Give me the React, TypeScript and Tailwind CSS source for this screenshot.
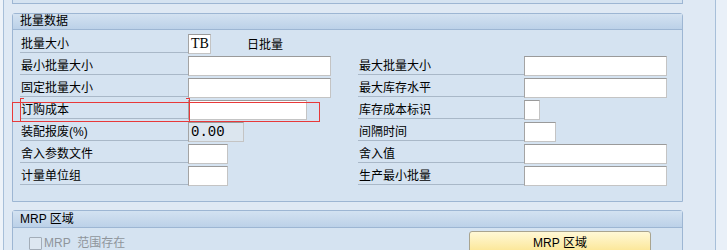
import React from "react";

type Cell = { label: string; w: number; value?: string; disabled?: boolean; extra?: string; serif?: boolean } | null;

const rows: [Cell, Cell][] = [
  [{ label: "批量大小", w: 23, value: "TB", extra: "日批量", serif: true }, null],
  [{ label: "最小批量大小", w: 143 }, { label: "最大批量大小", w: 143 }],
  [{ label: "固定批量大小", w: 143 }, { label: "最大库存水平", w: 143 }],
  [{ label: "订购成本", w: 119 }, { label: "库存成本标识", w: 16 }],
  [{ label: "装配报废(%)", w: 56, value: "0.00", disabled: true }, { label: "间隔时间", w: 32 }],
  [{ label: "舍入参数文件", w: 40 }, { label: "舍入值", w: 143 }],
  [{ label: "计量单位组", w: 40 }, { label: "生产最小批量", w: 143 }],
];

function Input({ w, value, disabled, serif }: { w: number; value?: string; disabled?: boolean; serif?: boolean }) {
  return (
    <div
      className={
        "h-[20px] border border-t-[#9a9a9a] border-l-[#a4a4a4] border-r-[#c4c4c4] border-b-[#c4c4c4] flex items-center pl-[2px] text-[14px] leading-[18px] text-black " +
        (disabled ? "bg-[#dce6ef]" : "bg-white")
      }
      style={{
        width: w,
        fontFamily: serif ? '"Liberation Serif", serif' : '"Liberation Mono", "DejaVu Sans Mono", monospace',
      }}
    >
      {value}
    </div>
  );
}

function Label({ text, w }: { text: string; w: number }) {
  return (
    <div
      className="h-[19px] border-b border-[#a9b8c8] pl-[1px] text-[12px] leading-[16px] pt-[2px] text-black whitespace-nowrap"
      style={{ width: w }}
    >
      {text}
    </div>
  );
}

export default function App() {
  const font = { fontFamily: '"Liberation Sans", "Noto Sans CJK SC", sans-serif' };
  return (
    <div className="relative w-[727px] h-[250px] overflow-hidden bg-[#eaf1f8] flex" style={font}>
      <div className="w-[3px] h-full bg-[#eef3f9]" />
      <div className="w-[713px] h-full bg-[#dfe9f4] border-l border-r border-[#a7bfd9] pl-[8px]">
        <div className="w-[671px] h-[4px] bg-[#d5e3f1] border-l border-r border-b border-[#9db6d3]" />
        <div className="mt-[9px] w-[671px] h-[189px] bg-[#d5e3f1] border border-[#9db6d3] rounded-t-[3px]">
          <div className="h-[16px] border-b border-[#9db6d3] bg-gradient-to-b from-[#d3e2f1] to-[#bcd1e8] pl-[7px] text-[12px] leading-[15px] text-black">
            批量数据
          </div>
          <div className="pt-[4px] pl-[7px] flex flex-col">
            {rows.map(([l, r], i) => (
              <div key={i} className="h-[22px] flex items-start">
                {l && (
                  <>
                    <Label text={l.label} w={168} />
                    <div className="w-[170px] flex items-start">
                      <Input w={l.w} value={l.value} disabled={l.disabled} serif={l.serif} />
                      {l.extra && (
                        <span className="ml-[36px] text-[12px] leading-[16px] pt-[3px] text-black">{l.extra}</span>
                      )}
                    </div>
                  </>
                )}
                {r && (
                  <>
                    <Label text={r.label} w={166} />
                    <Input w={r.w} />
                  </>
                )}
              </div>
            ))}
          </div>
        </div>
        <div className="mt-[8px] w-[671px] h-[60px] bg-[#d5e3f1] border border-[#9db6d3] rounded-t-[3px]">
          <div className="h-[17px] border-b border-[#9db6d3] bg-gradient-to-b from-[#d3e2f1] to-[#bcd1e8] pl-[7px] text-[12px] leading-[16px] text-black">
            MRP 区域
          </div>
          <div className="flex items-start">
            <div className="w-[456px] pl-[16px] pt-[8px] flex items-center">
              <div className="w-[13px] h-[13px] border border-[#a3adb8] bg-[#dde7f1] rounded-[1px]" />
              <span className="ml-[2px] text-[12px] leading-[14px] text-[#8f959b]">MRP&nbsp;&nbsp;范围存在</span>
            </div>
            <div className="mt-[3px] w-[182px] h-[24px] border border-[#a9a48f] rounded-t-[3px] bg-gradient-to-b from-[#fff8d6] to-[#fbe48c] flex items-center justify-center text-[12px] leading-[14px] text-black">
              MRP 区域
            </div>
          </div>
        </div>
      </div>
      <div className="flex-1 h-full bg-[#e9f0f8]" />

      <div className="absolute left-[12px] top-[102px] w-[308px] h-[20px] border border-[#e8393a]" />
      <div className="absolute left-[20px] top-[98px] w-[4px] h-[24px] border-l border-t border-[#e8393a]" />
      <div className="absolute left-[186px] top-[98px] w-[4px] h-[24px] border-r border-t border-[#e8393a]" />
    </div>
  );
}
